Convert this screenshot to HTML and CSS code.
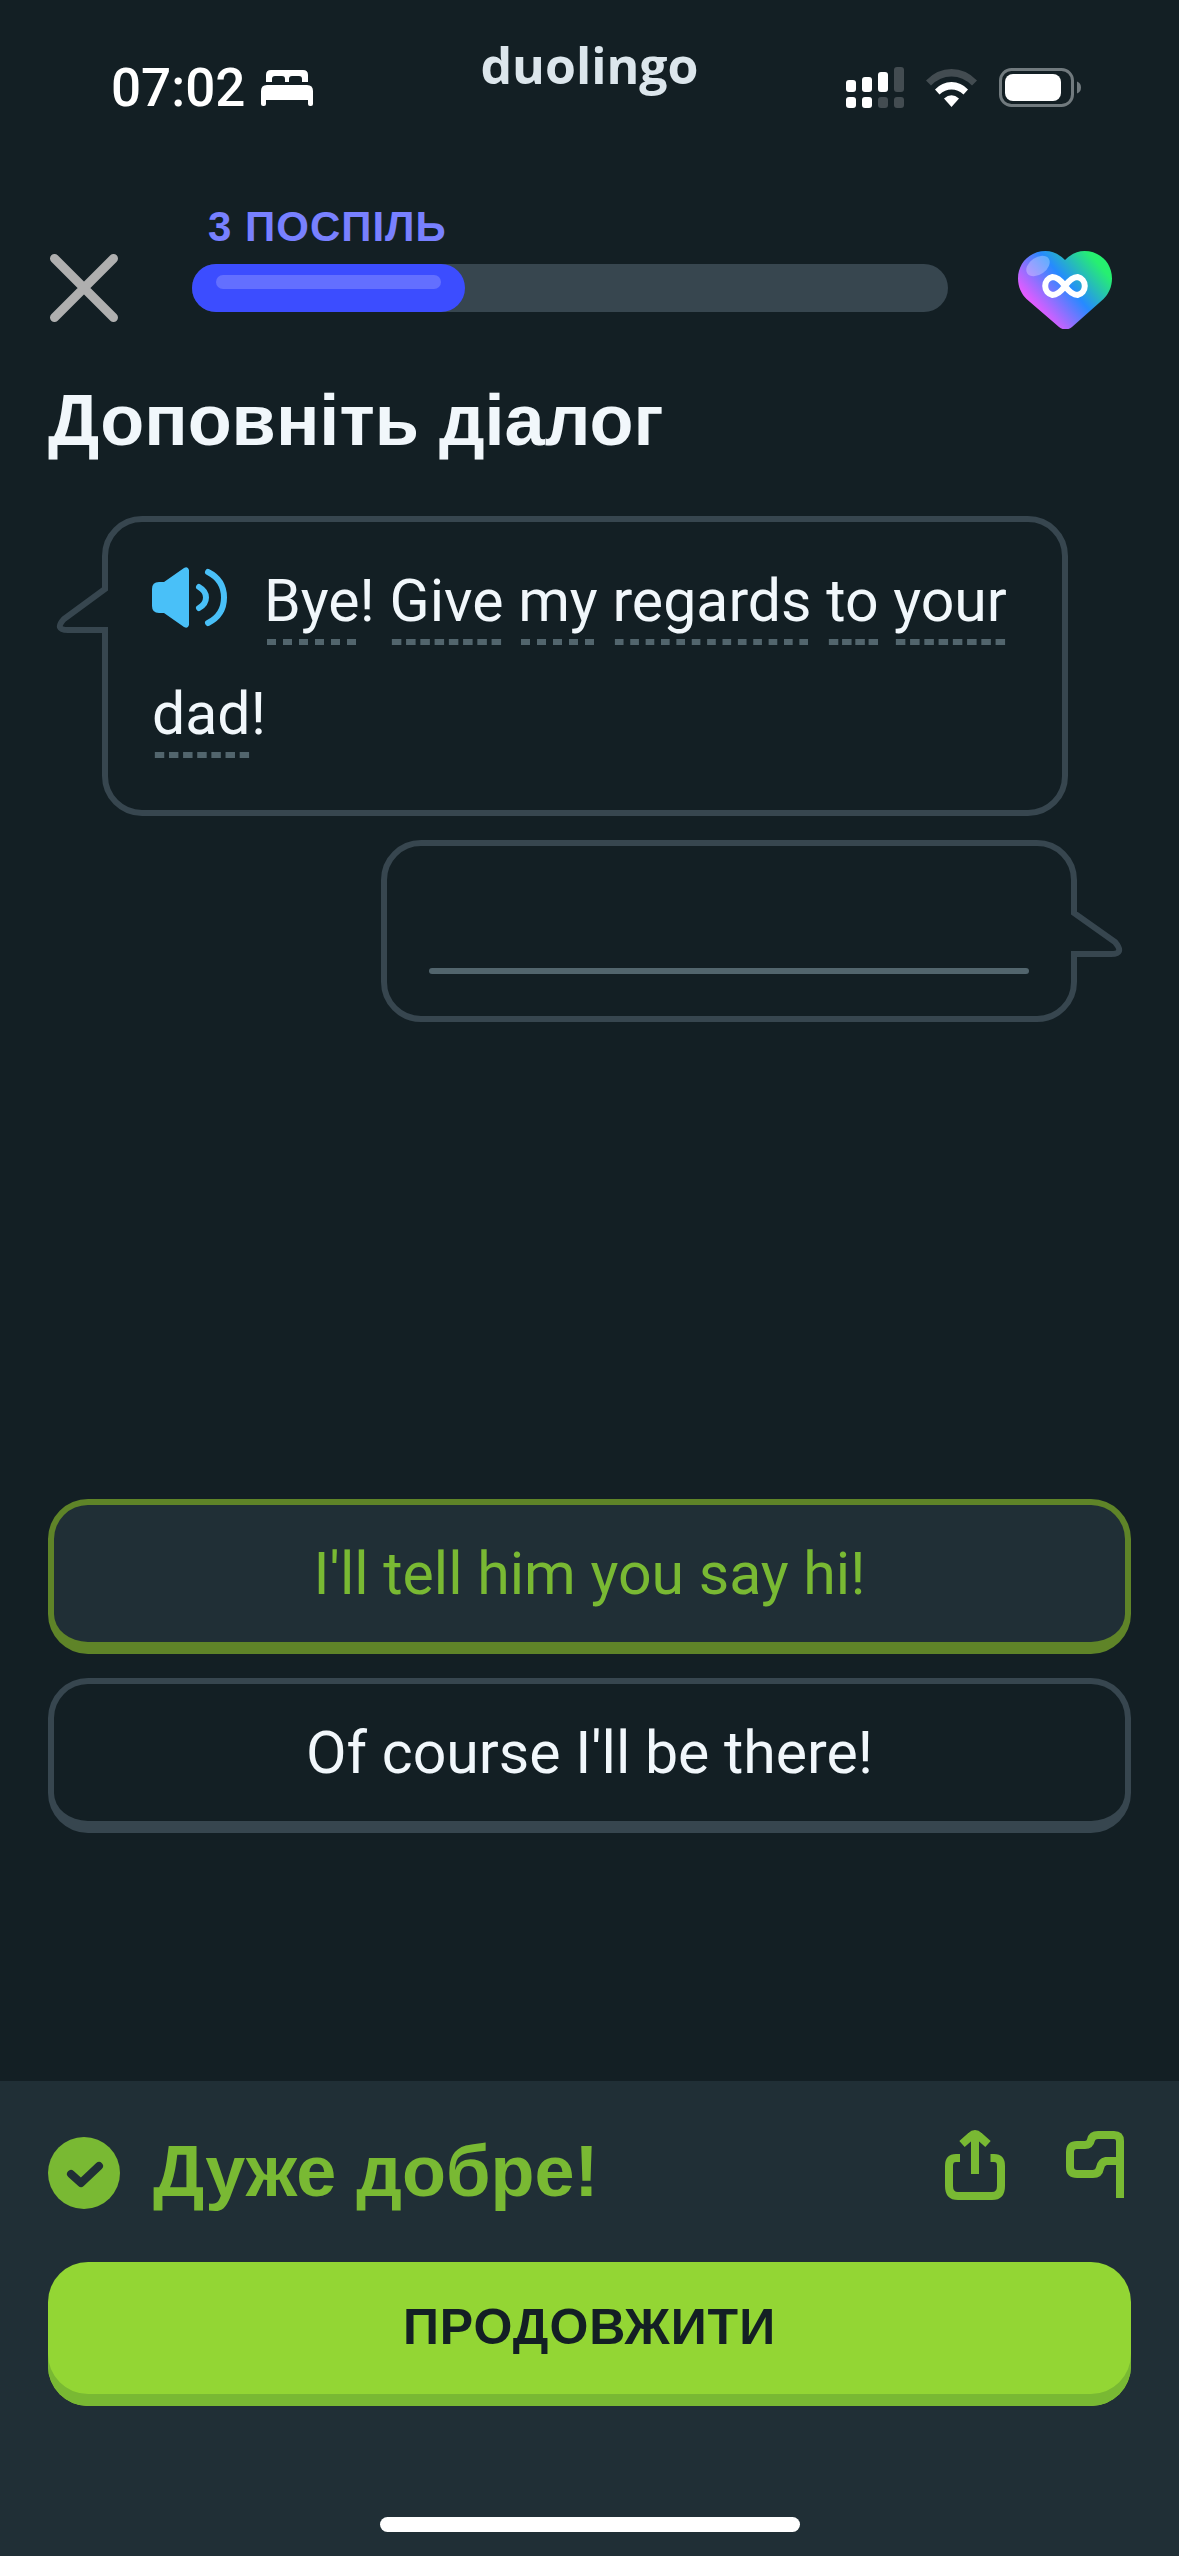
FILE: index.html
```html
<!DOCTYPE html>
<html lang="uk">
<head>
  <meta charset="utf-8">
  <meta name="viewport" content="width=device-width, initial-scale=1">
  <title>Duolingo</title>
  <link rel="stylesheet" href="styles.css">
</head>
<body>
  <div class="screen">
    <header class="status">
      <div class="status-side status-left">
        <span class="clock">07:02</span>
        <svg class="icon" width="52" height="36" viewBox="0 0 52 36" aria-hidden="true">
          <path fill="#fff" d="M5 12V5q0-5 5-5h32q5 0 5 5v7h-6V9q0-3-3-3h-7q-3 0-3 3v3h-4V9q0-3-3-3h-7q-3 0-3 3v3zM0 21q0-6 6-6h40q6 0 6 6v13q0 2-2 2h-1q-2 0-2-2v-4H5v4q0 2-2 2H2q-2 0-2-2z"/>
        </svg>
      </div>
      <span class="brand">duolingo</span>
      <div class="status-side status-right">
        <svg class="icon" width="58" height="42" viewBox="0 0 58 42" aria-hidden="true">
          <g fill="#fff">
            <rect x="0" y="13" width="10" height="12" rx="3"/><rect x="16" y="10" width="10" height="15" rx="3"/><rect x="32" y="5" width="10" height="20" rx="3"/>
            <rect x="0" y="30" width="10" height="11" rx="3"/><rect x="16" y="30" width="10" height="11" rx="3"/>
          </g>
          <g fill="#434c51">
            <rect x="48" y="0" width="10" height="25" rx="3"/><rect x="32" y="30" width="10" height="11" rx="3"/><rect x="48" y="30" width="10" height="11" rx="3"/>
          </g>
        </svg>
        <svg class="icon" width="51" height="38" viewBox="0 0 51 38" aria-hidden="true">
          <path fill="#434c51" d="M0 11.500Q11 0 25.500 0T51 11.500L46 16.500Q37 7.500 25.500 7.500T5 16.500z"/>
          <path fill="#fff" d="M9 20.500Q16 13 25.500 13T42 20.500L37.500 25.500Q32 20.500 25.500 20.500T13.500 25.500z"/>
          <path fill="#fff" d="M18 29.500Q25.500 23 33 29.500L25.500 38z"/>
        </svg>
        <svg class="icon" width="82" height="40" viewBox="0 0 82 40" aria-hidden="true">
          <rect x="1.500" y="1.500" width="72" height="36" rx="11" fill="none" stroke="#717a7e" stroke-width="3"/>
          <rect x="6" y="6" width="56" height="27" rx="8" fill="#fff"/>
          <path fill="#717a7e" d="M78 13.500q4 1.500 4 6t-4 6z"/>
        </svg>
      </div>
    </header>

    <div class="lesson-bar">
      <button class="plain" type="button" aria-label="Закрити">
        <svg class="icon" width="72" height="72" viewBox="0 0 72 72" fill="none" stroke="#afafaf" stroke-width="9" stroke-linecap="round">
          <path d="M6.500 6.500l59 59M65.500 6.500l-59 59"/>
        </svg>
      </button>
      <div class="progress">
        <span class="streak">3 ПОСПІЛЬ</span>
        <div class="track" role="progressbar" aria-valuenow="36" aria-valuemin="0" aria-valuemax="100" aria-label="Прогрес">
          <div class="fill" style="width: 36.100%"><div class="shine"></div></div>
        </div>
      </div>
      <svg class="icon" width="94" height="78" viewBox="0 0 94 78" aria-hidden="true">
        <defs>
          <linearGradient id="heart" gradientUnits="userSpaceOnUse" x1="21" y1="62" x2="80" y2="12">
            <stop offset="0.020" stop-color="#e05cff"/><stop offset="0.520" stop-color="#268aff"/><stop offset="1" stop-color="#26f070"/>
          </linearGradient>
        </defs>
        <path fill="url(#heart)" d="M47 9Q38 0 27.500 0C12 0 0 12 0 27.500 0 36 3.500 43 8.500 48L41 76Q47.500 81 54 76L85.500 48C90.500 43 94 36 94 27.500 94 12 82 0 66.500 0Q56 0 47 9z"/>
        <ellipse cx="20" cy="15" rx="13" ry="8.500" transform="rotate(-35 20 15)" fill="#fff" fill-opacity="0.300"/>
        <path fill="none" stroke="#fff" stroke-width="6" d="M47 35C43 29.500 39 26 34.500 26a9.200 9.200 0 0 0 0 18C39 44 43 40.500 47 35S55 26 59.500 26a9.200 9.200 0 0 1 0 18C55 44 51 40.500 47 35z"/>
      </svg>
    </div>

    <main class="lesson">
      <h1 class="title">Доповніть діалог</h1>

      <div class="bubble bubble-in">
        <svg class="tail tail-left" width="52" height="52" viewBox="0 0 52 52" aria-hidden="true">
          <path fill="#131f24" d="M46 4h6v42h-6z"/>
          <path fill="none" stroke="#37464f" stroke-width="6" d="M49 0V5L8 35Q-2 46 12 46H49V52"/>
        </svg>
        <p class="phrase">
          <button class="plain speaker" type="button" aria-label="Прослухати">
            <svg class="icon" width="76" height="62" viewBox="0 0 76 62" aria-hidden="true">
              <path fill="#49c0f8" d="M0 22Q0 15 7 15H12L32 1Q36 -1 37 3V58Q36 62 32 60L12 46H7Q0 46 0 39z"/>
              <path fill="none" stroke="#49c0f8" stroke-width="6" stroke-linecap="round" d="M47 20Q54 24 54 30.500T47 41M56 5Q72 13 72 30.500T56 56"/>
            </svg>
          </button><span class="word">Bye</span>! <span class="word">Give</span> <span class="word">my</span> <span class="word">regards</span> <span class="word">to</span> <span class="word">your</span> <span class="word">dad</span>!
        </p>
      </div>

      <div class="bubble bubble-out">
        <svg class="tail tail-right" width="52" height="50" viewBox="0 0 52 50" aria-hidden="true">
          <path fill="#131f24" d="M0 3h6v40H0z"/>
          <path fill="none" stroke="#37464f" stroke-width="6" d="M3 0V2L44 31Q54 43 40 43H3V50"/>
        </svg>
        <div class="blank"></div>
      </div>

      <div class="options">
        <button class="option option-right" type="button">I'll tell him you say hi!</button>
        <button class="option" type="button">Of course I'll be there!</button>
      </div>
    </main>

    <footer class="result">
      <div class="result-head">
        <svg class="icon" width="72" height="72" viewBox="0 0 72 72" aria-hidden="true">
          <circle cx="36" cy="36" r="36" fill="#79b933"/>
          <path fill="none" stroke="#202f36" stroke-width="8" stroke-linecap="round" stroke-linejoin="round" d="M23 37l10 9 18-17"/>
        </svg>
        <h2 class="praise">Дуже добре!</h2>
        <div class="tools">
          <button class="plain" type="button" aria-label="Поділитися">
            <svg class="icon" width="60" height="70" viewBox="0 0 60 70" fill="none" stroke="#79b933" stroke-width="8">
              <path d="M15 28H11Q4 28 4 36V56Q4 66 13 66H47Q56 66 56 56V36Q56 28 49 28H45.500M30 44V6M17 14L26 6Q30 2 34 6L43 14"/>
            </svg>
          </button>
          <button class="plain" type="button" aria-label="Поскаржитися">
            <svg class="icon" width="58" height="70" viewBox="0 0 58 70" fill="none" stroke="#79b933" stroke-width="8">
              <path d="M54 68V11Q54 5 48 5H32Q26 5 25 10T19 15H11Q4 15 4 22V37Q4 44 11 44H27Q33 44 34 38T40 31H54"/>
            </svg>
          </button>
        </div>
      </div>
      <button class="continue" type="button">ПРОДОВЖИТИ</button>
      <div class="home"></div>
    </footer>
  </div>
</body>
</html>
```
FILE: styles.css
```css
* {
  box-sizing: border-box;
}

body {
  margin: 0;
  background: #131f24;
  color: #f1f7fb;
  font-family: Roboto, "Noto Sans", sans-serif;
}

.screen {
  display: flex;
  flex-direction: column;
  min-height: 100vh;
}

.icon {
  display: block;
  flex: none;
}

.plain {
  padding: 0;
  border: 0;
  background: none;
}

/* Status bar */
.status {
  display: grid;
  grid-template-columns: 1fr auto 1fr;
  align-items: start;
  height: 200px;
  padding: 31px 98px 0;
}

.status-side {
  display: flex;
  align-items: center;
  gap: 16px;
  height: 56px;
  margin-top: 29px;
}

.status-left {
  padding-left: 13px;
}

.status-right {
  justify-content: flex-end;
  gap: 22px;
}

.clock {
  color: #fff;
  font-size: 53px;
  font-weight: 500;
}

.brand {
  color: #dce6ec;
  font: 700 50px/68px "Open Sans", sans-serif;
}

/* Lesson bar */
.lesson-bar {
  display: flex;
  align-items: flex-end;
  height: 129px;
  padding: 0 67px 0 48px;
}

.lesson-bar > .plain {
  margin-bottom: 5px;
}

.progress {
  flex: 1;
  margin: 0 70px 17px 72px;
}

.streak {
  display: block;
  padding-left: 16px;
  color: #7880ff;
  font: 700 42px/52px "Liberation Sans", sans-serif;
  letter-spacing: 1px;
}

.track {
  height: 48px;
  margin-top: 11px;
  border-radius: 24px;
  background: #37464f;
}

.fill {
  height: 48px;
  padding: 11px 24px;
  border-radius: 24px;
  background: #3c4dff;
}

.shine {
  height: 14px;
  border-radius: 7px;
  background: #636fff;
}

.lesson {
  display: flex;
  flex: 1;
  flex-direction: column;
  padding: 0 48px;
}

.title,
.praise {
  margin: 0;
  font: 700 72px/96px "Liberation Sans", sans-serif;
}

.title {
  margin-top: 43px;
}

/* Dialogue */
.bubble {
  position: relative;
  border: 6px solid #37464f;
  border-radius: 40px;
}

.bubble-in {
  margin: 48px 63px 0 54px;
  padding: 22px 40px 40px 44px;
}

.bubble-out {
  margin: 24px 54px 0 333px;
  padding: 122px 42px 42px;
}

.tail {
  position: absolute;
}

.tail-left {
  top: 62px;
  left: -52px;
}

.tail-right {
  top: 65px;
  right: -52px;
}

.phrase {
  margin: 0;
  font-size: 59px;
  line-height: 113px;
}

.speaker {
  display: inline-block;
  margin-right: 36px;
  vertical-align: -8px;
}

.word {
  padding-bottom: 10px;
  background: linear-gradient(90deg, transparent 3px, #52656d 3px 12px, transparent 12px) 0 100% / 15px 6px round no-repeat;
}

.blank {
  height: 6px;
  border-radius: 3px;
  background: #52656d;
}

/* Answers */
.options {
  display: flex;
  flex-direction: column;
  gap: 24px;
  margin-top: auto;
  margin-bottom: 248px;
}

.option {
  height: 155px;
  border: 6px solid #37464f;
  border-bottom-width: 12px;
  border-radius: 40px;
  background: #131f24;
  color: #f1f7fb;
  font-family: inherit;
  font-size: 59px;
}

.option-right {
  border-color: #5f8428;
  background: #202f36;
  color: #79b933;
}

/* Result panel */
.result {
  padding: 40px 48px 24px;
  background: #202f36;
}

.result-head {
  display: flex;
  align-items: center;
  gap: 33px;
  height: 103px;
  margin-bottom: 38px;
}

.praise {
  flex: 1;
  padding-bottom: 4px;
  color: #79b933;
}

.tools {
  display: flex;
  gap: 61px;
  padding: 0 7px 15px 0;
}

.continue {
  display: block;
  width: 100%;
  height: 144px;
  padding-bottom: 16px;
  border: 0;
  border-radius: 40px;
  background: #93d634;
  box-shadow: inset 0 -12px #79b933;
  color: #131f24;
  font: 700 50px/60px "Liberation Sans", sans-serif;
  letter-spacing: 1px;
}

.home {
  width: 420px;
  height: 15px;
  margin: 111px auto 0;
  border-radius: 8px;
  background: #fff;
}
```
